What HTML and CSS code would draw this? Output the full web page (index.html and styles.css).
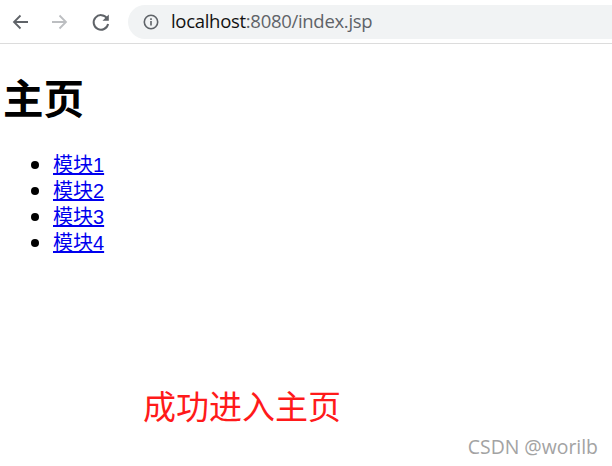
FILE: index.html
```html
<!DOCTYPE html>
<html lang="zh">
<head>
<meta charset="utf-8">
<title>主页</title>
<link rel="stylesheet" href="styles.css">
</head>
<body>
<header class="toolbar">
  <svg class="nav-icon" width="20" height="20" viewBox="0 0 20 20"><path d="M18 10H4M10.500 3.500 4 10l6.500 6.500" fill="none" stroke="#5f6368" stroke-width="1.800"/></svg>
  <svg class="nav-icon" width="20" height="20" viewBox="0 0 20 20"><path d="M2 10h14M9.500 3.500 16 10l-6.500 6.500" fill="none" stroke="#bcbec1" stroke-width="1.800"/></svg>
  <svg class="nav-icon reload" width="20" height="20" viewBox="0 0 20 20"><path d="M16 6.300A7.300 7.300 0 1 0 17.100 12" fill="none" stroke="#5f6368" stroke-width="2"/><path d="M17.800 2.500V8.800H11.500Z" fill="#5f6368"/></svg>
  <div class="omnibox">
    <svg class="info" width="16" height="16" viewBox="0 0 16 16"><circle cx="8" cy="8" r="6.700" fill="none" stroke="#5f6368" stroke-width="1.600"/><path d="M7.200 7h1.600v4.500H7.200zM7.200 4.300h1.600v1.600H7.200z" fill="#5f6368"/></svg>
    <span class="url"><span class="host">localhost</span>:8080/index.jsp</span>
  </div>
</header>
<main class="page">
  <h1 class="title">主页</h1>
  <ul class="modules">
    <li><a href="#">模块1</a></li>
    <li><a href="#">模块2</a></li>
    <li><a href="#">模块3</a></li>
    <li><a href="#">模块4</a></li>
  </ul>
  <p class="note">成功进入主页</p>
  <p class="mark">CSDN @worilb</p>
</main>
</body>
</html>
```
FILE: styles.css
```css
html, body { margin: 0; padding: 0; background: #fff; overflow: hidden; }
body { width: 612px; height: 466px; font-family: "Noto Sans CJK SC", "Liberation Sans", sans-serif; }
.toolbar {
  height: 43px; border-bottom: 1px solid #dcdcdc;
  display: flex; align-items: center; padding-left: 10px;
}
.nav-icon { margin-right: 20px; flex: none; }
.reload { margin-left: 1px; margin-right: 17px; }
.omnibox {
  flex: 1; height: 34px; background: #f1f3f4;
  border-radius: 17px 0 0 17px; display: flex; align-items: center; padding-left: 15px;
}
.info { margin-right: 12px; }
.url { font: 18.500px/1 "Open Sans", "Liberation Sans", sans-serif; color: #5f6368; letter-spacing: -0.3px; }
.host { color: #111; }
.page { padding-left: 4px; }
.title { font-size: 40.500px; line-height: 44px; font-weight: 700; margin: 31px 0 0 -1px; color: #000; }
.modules { margin: 32px 0 0; padding-left: 49px; font-size: 20px; line-height: 26px; }
.modules li { height: 26px; }
.modules a { color: #0000ee; text-decoration: underline; font-family: "Liberation Sans", "Noto Sans CJK SC", sans-serif; }
.note { margin: 130px 0 0 139px; font-size: 33px; line-height: 40px; color: #ff1a1a; }
.mark { margin: 10px 0 0; text-align: right; padding-right: 14px; font: 19.400px/24px "Open Sans", "Liberation Sans", sans-serif; color: #a3a3a3; }
```
